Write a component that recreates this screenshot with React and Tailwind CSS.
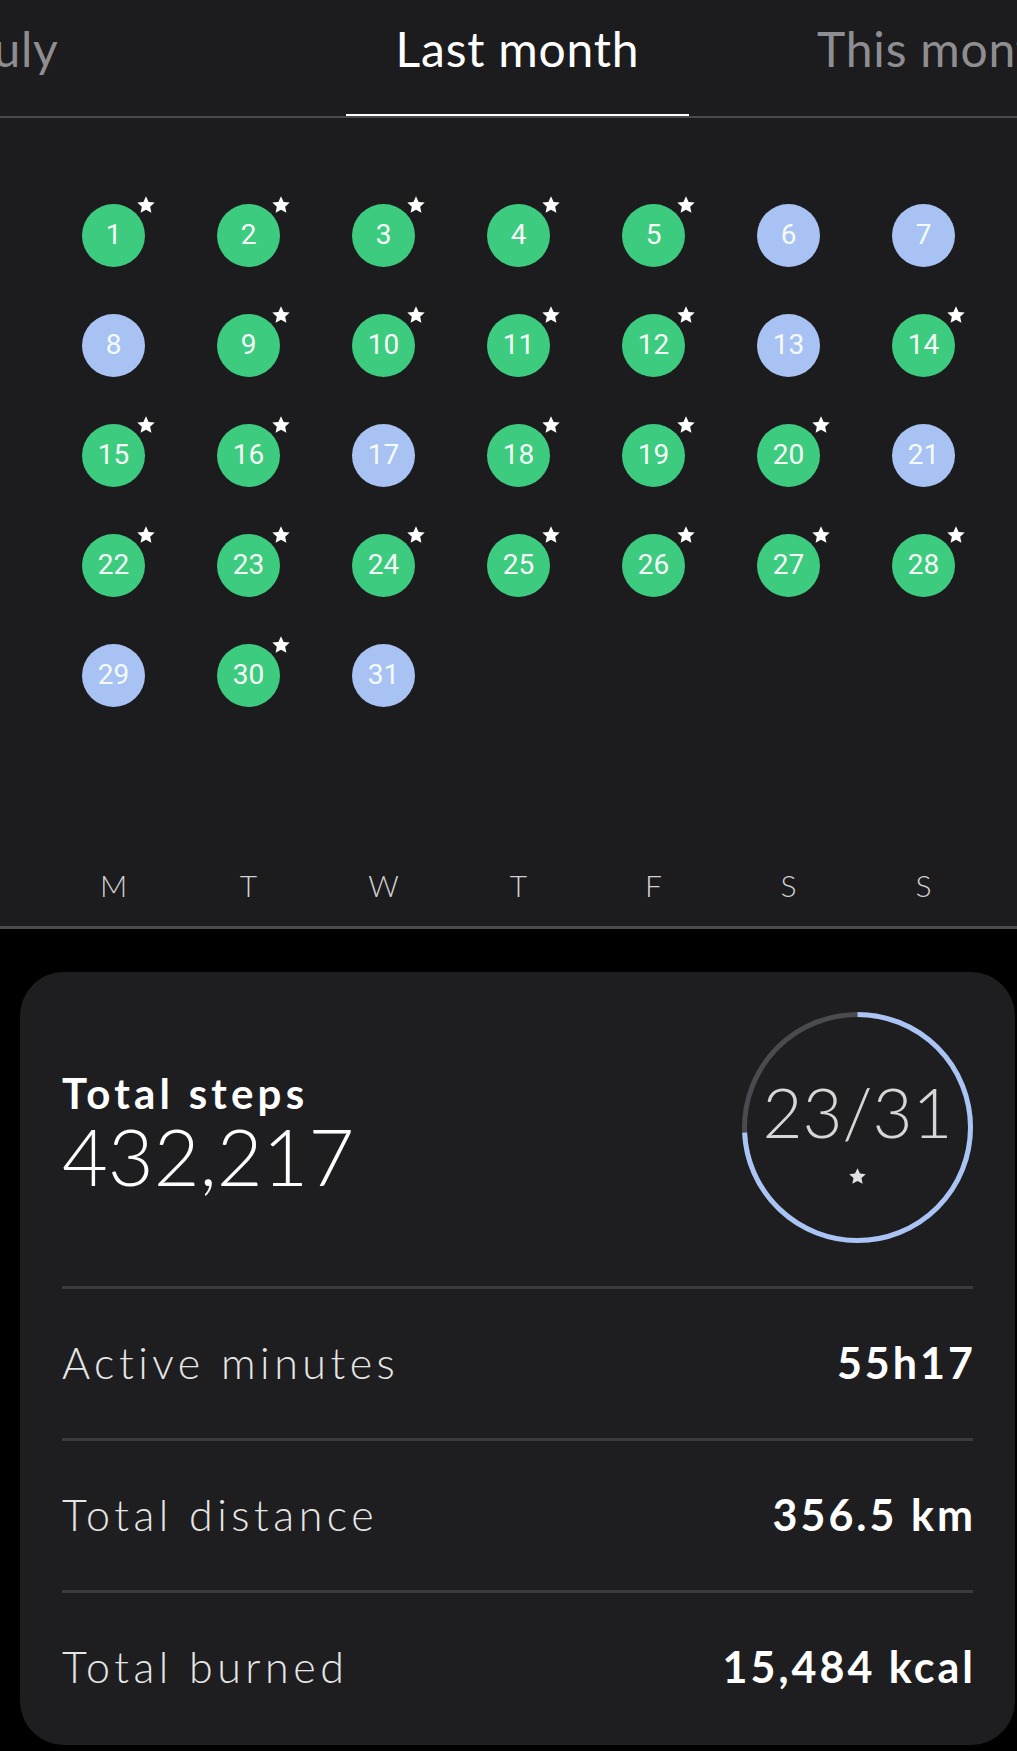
import React from 'react';

const blueDays = [6, 7, 8, 13, 17, 21, 29, 31];
const weekdays = ['M', 'T', 'W', 'T', 'F', 'S', 'S'];

const Star = ({ className }) => (
    <svg viewBox="0 0 24 24" className={className} fill="currentColor">
        <path d="M12 2.5l2.85 6.1 6.65.7-4.98 4.5 1.4 6.6L12 17.05 6.08 20.4l1.4-6.6L2.5 9.3l6.65-.7z" />
    </svg>
);

const DayDot = ({ day }) => {
    const done = !blueDays.includes(day);
    return (
        <div className="flex h-[110px] items-center justify-center">
            <div
                className={`relative flex h-[63px] w-[63px] items-center justify-center rounded-full ${done ? 'bg-[#3dcb7f]' : 'bg-[#a8c2f4]'}`}
            >
                <span className="font-['Roboto'] text-[28px] leading-none text-[#f4fbf6]">{day}</span>
                {done && <Star className="absolute left-[53px] top-[-10px] h-[22px] w-[22px] text-white" />}
            </div>
        </div>
    );
};

const StatRow = ({ label, value }) => (
    <div className="flex h-[152px] items-center justify-between border-t-[3px] border-[#3b3b3e]">
        <span className="text-[43px] font-light tracking-[0.105em] text-[#e6e6e6]">{label}</span>
        <span className="-mr-[3px] text-[43px] font-bold tracking-[0.07em] text-white">{value}</span>
    </div>
);

const GoalRing = () => {
    const r = 113;
    const c = 2 * Math.PI * r;
    const done = c * (23 / 31);
    return (
        <div className="relative h-[231px] w-[231px]">
            <svg viewBox="0 0 231 231" className="absolute inset-0 h-full w-full -rotate-90">
                <circle cx="115.5" cy="115.5" r={r} fill="none" stroke="#4a4b50" strokeWidth="5" />
                <circle
                    cx="115.5"
                    cy="115.5"
                    r={r}
                    fill="none"
                    stroke="#a9c4f5"
                    strokeWidth="5"
                    strokeDasharray={`${done} ${c}`}
                />
            </svg>
            <div className="relative flex h-full flex-col items-center justify-center pt-[8px]">
                <span className="text-[69px] font-light leading-none text-[#d6d6d6]">23/31</span>
                <Star className="mt-[20px] h-[21px] w-[21px] text-[#e0e0e0]" />
            </div>
        </div>
    );
};

export default function App() {
    const days = Array.from({ length: 31 }, (_, i) => i + 1);
    return (
        <div className="h-[1751px] w-[1017px] overflow-hidden bg-black font-['Lato',sans-serif]">
            <div className="bg-[#1c1c1e] border-b-[3px] border-[#4a4a4c] pb-[26px]">
                {/* tabs */}
                <div className="flex h-[118px] overflow-hidden whitespace-nowrap border-b-2 border-[#48484a] tracking-[0.05em]">
                    <div className="w-[346px] shrink-0 pt-[25px]">
                        <span className="-ml-[27px] block text-[48px] leading-none text-[#8e8e92]">July</span>
                    </div>
                    <div className="-mb-[2px] w-[343px] shrink-0 border-b-4 border-white pt-[25px] text-center">
                        <span className="text-[48px] leading-none text-white">Last month</span>
                    </div>
                    <div className="shrink-0 pl-[128px] pt-[25px]">
                        <span className="text-[48px] leading-none text-[#8e8e92]">This month</span>
                    </div>
                </div>

                {/* calendar */}
                <div className="mt-[62px] grid grid-cols-[repeat(7,135px)] pl-[46px]">
                    {days.map((d) => (
                        <DayDot key={d} day={d} />
                    ))}
                </div>

                <div className="mt-[140px] grid grid-cols-[repeat(7,135px)] pl-[46px]">
                    {weekdays.map((w, i) => (
                        <span key={i} className="text-center text-[30px] font-light leading-none text-[#d2d2d2]">
                            {w}
                        </span>
                    ))}
                </div>
            </div>

            {/* summary card */}
            <div className="ml-[20px] mt-[43px] h-[773px] w-[995px] rounded-[44px] bg-[#1e1e20] px-[42px]">
                <div className="flex h-[314px] items-center justify-between pb-[3px]">
                    <div className="pt-[12px]">
                        <div className="text-[42px] font-bold leading-none tracking-[0.1em] text-white">Total steps</div>
                        <div className="mt-[2px] text-[79px] font-light leading-none text-white">432,217</div>
                    </div>
                    <GoalRing />
                </div>
                <StatRow label="Active minutes" value="55h17" />
                <StatRow label="Total distance" value="356.5 km" />
                <StatRow label="Total burned" value="15,484 kcal" />
            </div>
        </div>
    );
}
